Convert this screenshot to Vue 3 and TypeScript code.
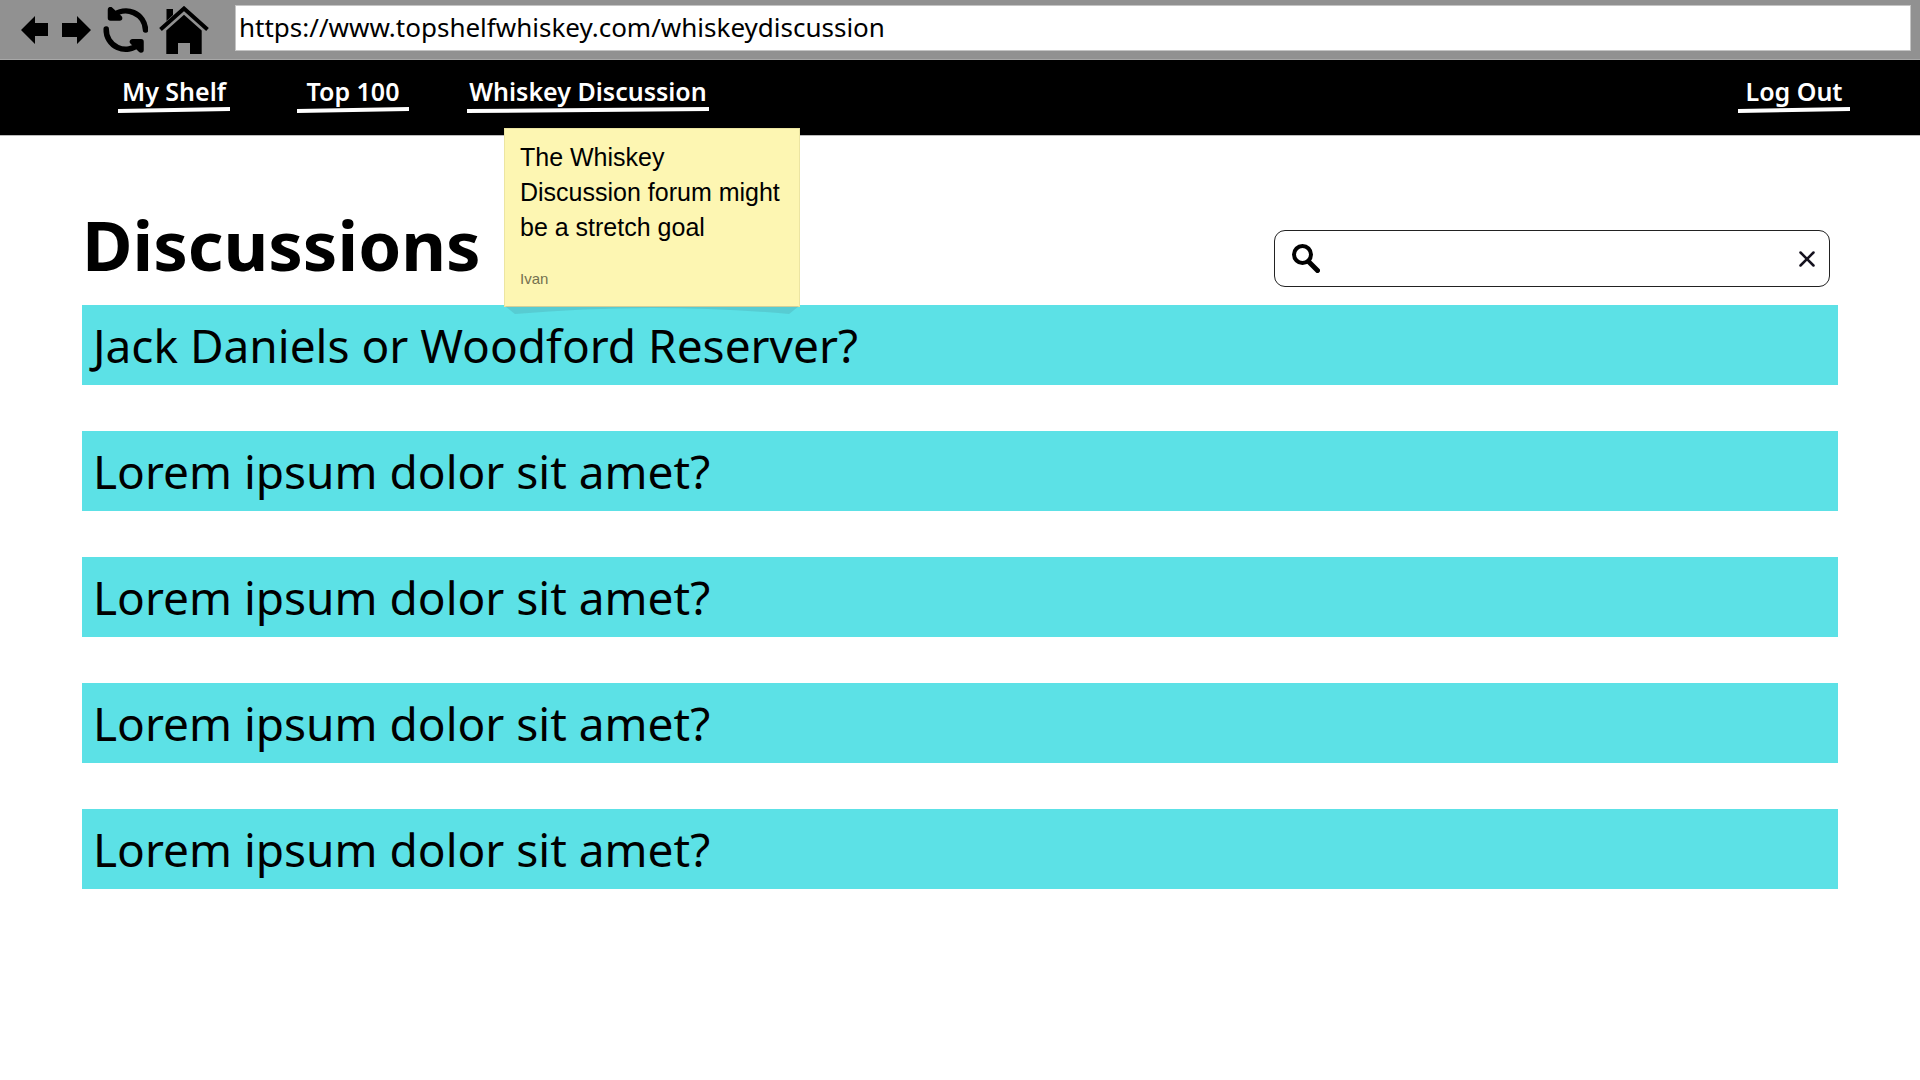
<script setup lang="ts">
import { ref } from 'vue'

interface NavLink {
  label: string
  width: number
  space: number
  note?: { lines: string; author: string }
}

const url = ref('https://www.topshelfwhiskey.com/whiskeydiscussion')
const query = ref('')

const links: NavLink[] = [
  { label: 'My Shelf', width: 112, space: 67 },
  { label: 'Top 100', width: 112, space: 58 },
  {
    label: 'Whiskey Discussion',
    width: 242,
    space: 0,
    note: { lines: 'The Whiskey Discussion forum might be a stretch goal', author: 'Ivan' },
  },
]

const topics: string[] = [
  'Jack Daniels or Woodford Reserver?',
  'Lorem ipsum dolor sit amet?',
  'Lorem ipsum dolor sit amet?',
  'Lorem ipsum dolor sit amet?',
  'Lorem ipsum dolor sit amet?',
]
</script>

<template>
  <div class="page">
    <header class="browser">
      <div class="controls">
        <button type="button" class="tool" aria-label="Back">
          <svg width="27" height="28" viewBox="0 0 27 28"><path d="M0 14 14 0V7H27V20H14V28Z" /></svg>
        </button>
        <button type="button" class="tool forward" aria-label="Forward">
          <svg width="29" height="28" viewBox="0 0 29 28"><path d="M29 14 15 0V7H0V21H15V28Z" /></svg>
        </button>
        <button type="button" class="tool reload" aria-label="Reload">
          <svg width="45" height="46" viewBox="0 0 45 46" fill="none" stroke="#000" stroke-width="5.500" stroke-linecap="round" stroke-linejoin="round">
            <path d="M10 9A19.500 19.500 0 0 1 42.500 23" />
            <path d="M7.500 2.700V11H16.600Z" fill="#000" />
            <path d="M3.200 22A19.500 19.500 0 0 0 36 37" />
            <path d="M29.500 34.700H38V43Z" fill="#000" />
          </svg>
        </button>
        <button type="button" class="tool home" aria-label="Home">
          <svg width="50" height="48" viewBox="0 0 50 48">
            <path d="M7.500 3H14V9L7.500 15Z" />
            <path d="M1.500 23.500 25 2.500 48.500 23.500" fill="none" stroke="#000" stroke-width="4" />
            <path d="M7.300 24.500 25 8.700 42.700 24.500V48H31V37H19V48H7.300Z" />
          </svg>
        </button>
      </div>
      <input v-model="url" class="address" type="text" aria-label="Address" spellcheck="false" />
    </header>

    <nav class="nav">
      <ul class="links">
        <li v-for="link in links" :key="link.label" class="item" :style="{ marginRight: link.space + 'px' }">
          <a href="#" class="link" :style="{ width: link.width + 'px' }">
            {{ link.label }}
            <svg class="stroke" viewBox="0 0 112 6" preserveAspectRatio="none"><path d="M0 2 112 0V4L0 6Z" /></svg>
          </a>
          <aside v-if="link.note" class="note">
            <p class="note-text">{{ link.note.lines }}</p>
            <p class="note-author">{{ link.note.author }}</p>
            <svg class="curl" viewBox="0 0 296 8" preserveAspectRatio="none"><path d="M0 0 10 8Q148-4 286 8L296 0Z" /></svg>
          </aside>
        </li>
      </ul>
      <a href="#" class="link logout">
        Log Out
        <svg class="stroke" viewBox="0 0 112 6" preserveAspectRatio="none"><path d="M0 2 112 0V4L0 6Z" /></svg>
      </a>
    </nav>

    <main class="content">
      <div class="head">
        <h1 class="title">Discussions</h1>
        <form class="search" role="search" @submit.prevent>
          <svg width="28" height="29" viewBox="0 0 28 29" fill="none" stroke="#000">
            <circle cx="10.500" cy="10.500" r="8.500" stroke-width="4" />
            <path d="M17 18 25.500 26.500" stroke-width="5" stroke-linecap="round" />
          </svg>
          <input v-model="query" class="query" type="text" aria-label="Search discussions" />
          <button type="button" class="clear" aria-label="Clear search" @click="query = ''">
            <svg width="16" height="16" viewBox="0 0 16 16"><path d="M1.500 1.500 14.500 14.500M14.500 1.500 1.500 14.500" stroke="#15121f" stroke-width="2.500" stroke-linecap="round" /></svg>
          </button>
        </form>
      </div>
      <ul class="topics">
        <li v-for="(topic, i) in topics" :key="i">
          <a href="#" class="topic">{{ topic }}</a>
        </li>
      </ul>
    </main>
  </div>
</template>

<style>
body {
  margin: 0;
  background: #fff;
}
</style>

<style scoped>
* {
  box-sizing: border-box;
}
.page {
  font-family: 'Noto Sans', sans-serif;
  color: #000;
}
ul,
p,
h1 {
  margin: 0;
  padding: 0;
  list-style: none;
}
svg {
  display: block;
}
button {
  padding: 0;
  border: 0;
  background: none;
}
.browser {
  display: flex;
  align-items: center;
  height: 60px;
  padding: 0 9px 4px 21px;
  background: #919191;
  border-bottom: 1px solid #a8a8a8;
}
.controls {
  display: flex;
  align-items: center;
  flex: none;
  width: 214px;
  padding-top: 4px;
}
.forward {
  margin-left: 14px;
}
.reload {
  margin-left: 12px;
}
.home {
  margin-left: 11px;
}
.address {
  flex: 1;
  min-width: 0;
  height: 46px;
  padding: 0 3px 2px;
  border: 1px solid #c4c4c4;
  background: #fff;
  color: #000;
  font: 26px 'Noto Sans', sans-serif;
}
.nav {
  display: flex;
  justify-content: space-between;
  align-items: flex-start;
  height: 76px;
  padding: 15px 70px 0 118px;
  background: #000;
  border-bottom: 1px solid #bbb;
}
.links {
  display: flex;
}
.item {
  position: relative;
}
.link {
  display: block;
  color: #fff;
  font-size: 25px;
  line-height: 32px;
  font-weight: 600;
  text-align: center;
  text-decoration: none;
  white-space: nowrap;
}
.logout {
  width: 112px;
}
.stroke {
  width: 100%;
  height: 6px;
  fill: #fff;
}
.note {
  position: absolute;
  z-index: 2;
  top: 53px;
  left: 37px;
  width: 296px;
  height: 179px;
  padding: 11px 10px 0 15px;
  background: #fdf6b2;
  border: 1px solid #ece5a2;
  font-family: 'Liberation Sans', sans-serif;
}
.note-text {
  font-size: 25px;
  line-height: 35px;
}
.note-author {
  margin-top: 24px;
  color: #74714f;
  font-size: 15px;
  line-height: 20px;
}
.curl {
  position: absolute;
  top: 100%;
  left: 0;
  width: 100%;
  height: 8px;
  fill: rgba(60, 80, 90, 0.14);
}
.content {
  padding: 0 82px;
}
.head {
  display: flex;
  justify-content: space-between;
  align-items: flex-end;
  height: 169px;
  padding: 0 8px 18px 0;
}
.title {
  font-size: 69px;
  line-height: 86px;
  font-weight: 700;
}
.search {
  display: flex;
  align-items: center;
  width: 556px;
  height: 57px;
  padding: 0 14px 0 17px;
  border: 1px solid #222;
  border-radius: 11px;
}
.query {
  flex: 1;
  min-width: 0;
  height: 40px;
  padding: 0 12px;
  border: 0;
  outline: 0;
  font: 25px 'Noto Sans', sans-serif;
}
.topics {
  display: grid;
  gap: 46px;
}
.topic {
  display: block;
  padding: 0 11px;
  background: #5ce1e6;
  color: #000;
  font-size: 46px;
  line-height: 80px;
  text-decoration: none;
}
</style>
